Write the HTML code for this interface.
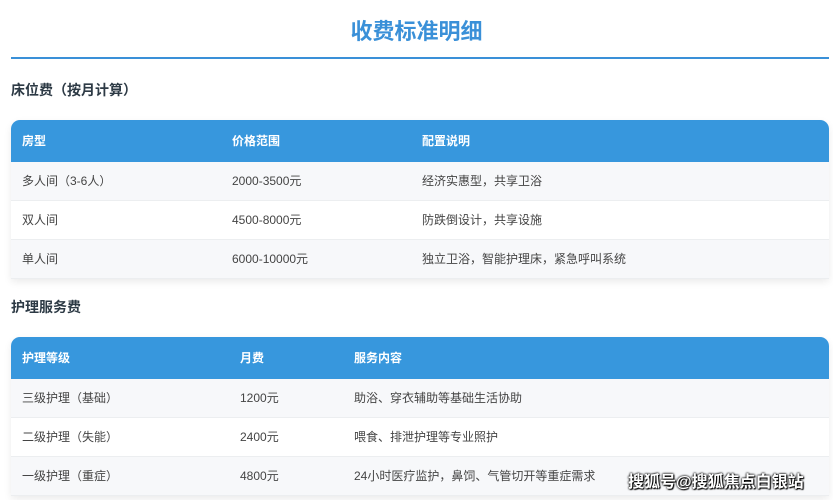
<!DOCTYPE html>
<html><head><meta charset="utf-8"><style>
body{margin:0;width:833px;height:500px;background:#fff;font-family:"Liberation Sans","Noto Sans CJK SC",sans-serif;position:relative;overflow:hidden}
.t{position:absolute;left:0;width:833px;top:16px;text-align:center;font-size:22px;font-weight:bold;color:#3a90d8;line-height:32px}
.rule{position:absolute;left:11px;width:818px;top:57px;height:2px;background:#3a90d8}
h2{position:absolute;left:11px;margin:0;font-size:14px;font-weight:bold;color:#2d3a45;line-height:20px}
.tb{position:absolute;left:11px;width:818px;border-radius:9px 9px 0 0;overflow:hidden;box-shadow:0 3px 8px rgba(0,0,0,0.08)}
.r{position:relative;height:38px;border-bottom:1px solid #eceef0;background:#fff;font-size:12px;color:#444}
.r.a{background:#f7f8fa}
.r.h{height:42px;background:#3797dd;color:#fff;font-weight:bold;border:none}
.r span{position:absolute;top:0;line-height:38px}
.r.h span{line-height:42px}
.wm{position:absolute;left:628px;top:468px;font-size:16px;color:#fff;font-weight:bold;text-shadow:0 0 2px #000,0 0 2px #000,1px 1px 1px #000}
</style></head><body>
<div class="t">收费标准明细</div>
<div class="rule"></div>
<h2 style="top:80px">床位费（按月计算）</h2>
<div class="tb" style="top:120px">
<div class="r h"><span style="left:11px">房型</span><span style="left:221px">价格范围</span><span style="left:411px">配置说明</span></div>
<div class="r a"><span style="left:11px">多人间（3-6人）</span><span style="left:221px">2000-3500元</span><span style="left:411px">经济实惠型，共享卫浴</span></div>
<div class="r"><span style="left:11px">双人间</span><span style="left:221px">4500-8000元</span><span style="left:411px">防跌倒设计，共享设施</span></div>
<div class="r a"><span style="left:11px">单人间</span><span style="left:221px">6000-10000元</span><span style="left:411px">独立卫浴，智能护理床，紧急呼叫系统</span></div>
</div>
<h2 style="top:297px">护理服务费</h2>
<div class="tb" style="top:337px">
<div class="r h"><span style="left:11px">护理等级</span><span style="left:229px">月费</span><span style="left:343px">服务内容</span></div>
<div class="r a"><span style="left:11px">三级护理（基础）</span><span style="left:229px">1200元</span><span style="left:343px">助浴、穿衣辅助等基础生活协助</span></div>
<div class="r"><span style="left:11px">二级护理（失能）</span><span style="left:229px">2400元</span><span style="left:343px">喂食、排泄护理等专业照护</span></div>
<div class="r a"><span style="left:11px">一级护理（重症）</span><span style="left:229px">4800元</span><span style="left:343px">24小时医疗监护，鼻饲、气管切开等重症需求</span></div>
</div>
<div class="wm">搜狐号@搜狐焦点白银站</div>
</body></html>
